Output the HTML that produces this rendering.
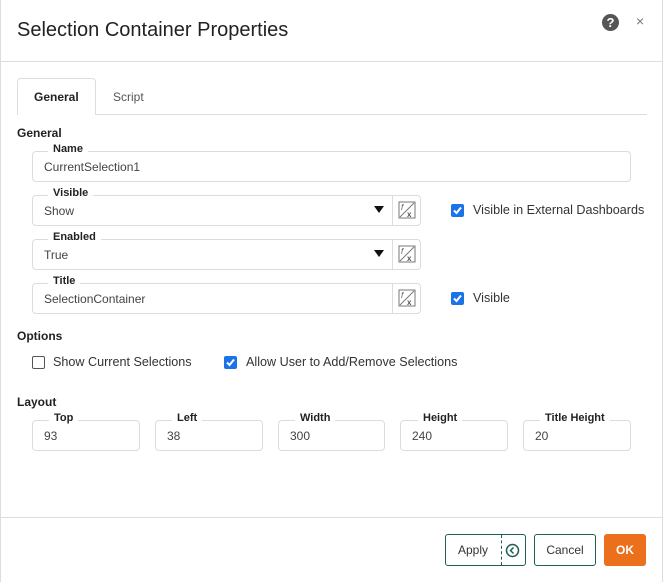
<!DOCTYPE html>
<html><head><style>
*{box-sizing:border-box;margin:0;padding:0}
body{width:663px;height:582px;background:#fff;font-family:"Liberation Sans",sans-serif;color:#333;position:relative;overflow:hidden}
.a{position:absolute}
.box{position:absolute;border:1px solid #dcdcdc;border-radius:4px;background:#fff}
.lbl{position:absolute;font-size:11px;font-weight:bold;color:#222;background:#fff;padding:0 5px;line-height:12px}
.val{position:absolute;font-size:12px;color:#444;left:11px;top:8px}
.fx{position:absolute;right:0;top:0;width:28px;height:100%;border-left:1px solid #dcdcdc}
.cb{position:absolute;width:13px;height:13px;border-radius:2px;background:#1a73e8}
.cbo{position:absolute;width:13px;height:13px;border-radius:2px;border:1px solid #555;background:#fff}
.t{position:absolute;font-size:12.6px;color:#333}
.h{position:absolute;font-size:12px;font-weight:bold;color:#222}
.btn{position:absolute;border:1px solid #1f5f56;border-radius:3px;font-size:12px;color:#333;text-align:center;line-height:30px}
</style></head><body>
<div class="a" style="left:0;top:0;width:663px;height:582px;border-left:1px solid #ddd;border-right:1px solid #ddd"></div>
<div class="a" style="left:17px;top:19px;font-size:20px;color:#222">Selection Container Properties</div>
<div class="a" style="left:602px;top:14px;width:17px;height:17px;border-radius:50%;background:#555;color:#fff;font-size:13px;font-weight:bold;text-align:center;line-height:17px">?</div>
<div class="a" style="left:636px;top:13px;font-size:14px;color:#777">×</div>
<div class="a" style="left:0;top:61px;width:663px;height:1px;background:#ddd"></div>
<div class="a" style="left:17px;top:114px;width:630px;height:1px;background:#ddd"></div>
<div class="a" style="left:17px;top:78px;width:79px;height:37px;border:1px solid #ddd;border-bottom:none;border-radius:4px 4px 0 0;background:#fff"></div>
<div class="a" style="left:34px;top:90px;font-size:12px;font-weight:bold;color:#222">General</div>
<div class="a" style="left:113px;top:90px;font-size:12px;color:#555">Script</div>
<div class="h" style="left:17px;top:126px">General</div>

<div class="box" style="left:32px;top:151px;width:599px;height:31px"><div class="val">CurrentSelection1</div></div>
<div class="lbl" style="left:48px;top:143px">Name</div>

<div class="box" style="left:32px;top:195px;width:389px;height:31px"><div class="val">Show</div><div class="a" style="right:36px;top:10px;width:0;height:0;border-left:5px solid transparent;border-right:5px solid transparent;border-top:7px solid #111"></div><div class="fx"><svg width="28" height="29"><rect x="6" y="6" width="16" height="16" fill="none" stroke="#777"/><line x1="7" y1="21" x2="21" y2="7" stroke="#777"/><text x="8" y="14" font-size="8" font-style="italic" fill="#555">f</text><text x="14" y="21" font-size="8" font-weight="bold" fill="#555">x</text></svg></div></div>
<div class="lbl" style="left:48px;top:187px">Visible</div>
<div class="cb" style="left:451px;top:204px"><svg width="13" height="13"><path d="M3 6.5 L5.5 9 L10 3.5" fill="none" stroke="#fff" stroke-width="2"/></svg></div>
<div class="t" style="left:473px;top:203px">Visible in External Dashboards</div>

<div class="box" style="left:32px;top:239px;width:389px;height:31px"><div class="val">True</div><div class="a" style="right:36px;top:10px;width:0;height:0;border-left:5px solid transparent;border-right:5px solid transparent;border-top:7px solid #111"></div><div class="fx"><svg width="28" height="29"><rect x="6" y="6" width="16" height="16" fill="none" stroke="#777"/><line x1="7" y1="21" x2="21" y2="7" stroke="#777"/><text x="8" y="14" font-size="8" font-style="italic" fill="#555">f</text><text x="14" y="21" font-size="8" font-weight="bold" fill="#555">x</text></svg></div></div>
<div class="lbl" style="left:48px;top:231px">Enabled</div>

<div class="box" style="left:32px;top:283px;width:389px;height:31px"><div class="val">SelectionContainer</div><div class="fx"><svg width="28" height="29"><rect x="6" y="6" width="16" height="16" fill="none" stroke="#777"/><line x1="7" y1="21" x2="21" y2="7" stroke="#777"/><text x="8" y="14" font-size="8" font-style="italic" fill="#555">f</text><text x="14" y="21" font-size="8" font-weight="bold" fill="#555">x</text></svg></div></div>
<div class="lbl" style="left:48px;top:275px">Title</div>
<div class="cb" style="left:451px;top:292px"><svg width="13" height="13"><path d="M3 6.5 L5.5 9 L10 3.5" fill="none" stroke="#fff" stroke-width="2"/></svg></div>
<div class="t" style="left:473px;top:291px">Visible</div>

<div class="h" style="left:17px;top:329px">Options</div>
<div class="cbo" style="left:32px;top:356px"></div>
<div class="t" style="left:53px;top:355px">Show Current Selections</div>
<div class="cb" style="left:224px;top:356px"><svg width="13" height="13"><path d="M3 6.5 L5.5 9 L10 3.5" fill="none" stroke="#fff" stroke-width="2"/></svg></div>
<div class="t" style="left:246px;top:355px">Allow User to Add/Remove Selections</div>

<div class="h" style="left:17px;top:395px">Layout</div>
<div class="box" style="left:32px;top:420px;width:108px;height:31px"><div class="val">93</div></div><div class="lbl" style="left:49px;top:412px">Top</div>
<div class="box" style="left:155px;top:420px;width:108px;height:31px"><div class="val">38</div></div><div class="lbl" style="left:172px;top:412px">Left</div>
<div class="box" style="left:278px;top:420px;width:107px;height:31px"><div class="val">300</div></div><div class="lbl" style="left:295px;top:412px">Width</div>
<div class="box" style="left:400px;top:420px;width:108px;height:31px"><div class="val">240</div></div><div class="lbl" style="left:418px;top:412px">Height</div>
<div class="box" style="left:523px;top:420px;width:108px;height:31px"><div class="val">20</div></div><div class="lbl" style="left:540px;top:412px">Title Height</div>

<div class="a" style="left:0;top:517px;width:663px;height:1px;background:#ddd"></div>
<div class="btn" style="left:445px;top:534px;width:81px;height:32px"><span style="position:absolute;left:12px">Apply</span><div class="a" style="left:55px;top:0;height:30px;border-left:1px dashed #1f5f56"></div><svg class="a" style="left:59px;top:8px" width="15" height="15"><circle cx="7.5" cy="7.5" r="6" fill="none" stroke="#1f5f56" stroke-width="1.5"/><path d="M8.5 4.5 L5.5 7.5 L8.5 10.5" fill="none" stroke="#1f5f56" stroke-width="1.5"/></svg></div>
<div class="btn" style="left:534px;top:534px;width:62px;height:32px">Cancel</div>
<div class="a" style="left:604px;top:534px;width:42px;height:32px;background:#ec6f1c;border-radius:3px;color:#fff;font-size:12px;font-weight:bold;text-align:center;line-height:32px">OK</div>
</body></html>
